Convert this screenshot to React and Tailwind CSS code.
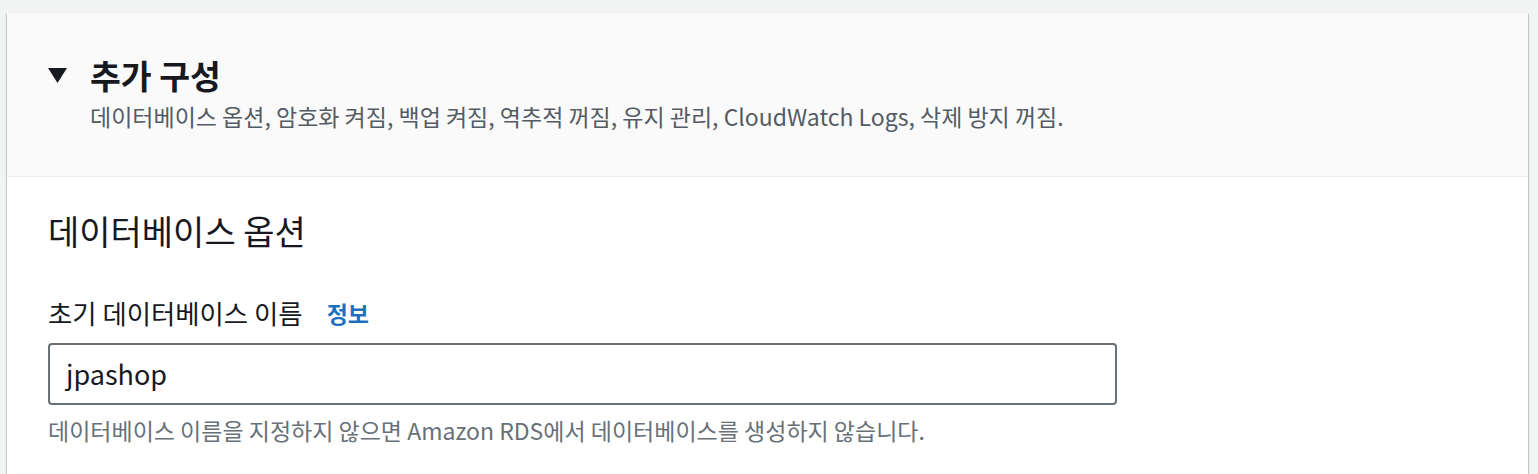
import React from 'react';

const font = { fontFamily: '"Noto Sans CJK KR", "Noto Sans", sans-serif' };

const Caret = () => (
  <svg width="19" height="15" viewBox="0 0 19 15" className="shrink-0">
    <path d="M0 0 H19 L9.5 15 Z" fill="#16191f" />
  </svg>
);

const App = () => {
  return (
    <div className="min-h-[474px] bg-[#f2f3f3] pt-[13px] pl-[7px] pr-[10px] overflow-hidden" style={font}>
      <div className="bg-white h-[470px] shadow-[0_1px_1px_0_rgba(0,28,36,0.3),1px_1px_1px_0_rgba(0,28,36,0.15),-1px_1px_1px_0_rgba(0,28,36,0.15)]">
        {/* Header */}
        <div className="bg-[#fafafa] border-b border-[#eaeded] h-[164px] pl-[41px] pt-[42px]">
          <div className="flex items-center gap-[23px]">
            <Caret />
            <h2 className="text-[33.5px] leading-[40px] font-bold text-[#16191f]">추가 구성</h2>
          </div>
          <p className="ml-[42px] mt-[6px] text-[23px] leading-[30px] text-[#545b64]">
            데이터베이스 옵션, 암호화 켜짐, 백업 켜짐, 역추적 꺼짐, 유지 관리, CloudWatch Logs, 삭제 방지 꺼짐.
          </p>
        </div>

        {/* Body */}
        <div className="pl-[41px] pt-[34px]">
          <h3 className="text-[34px] leading-[40px] text-[#16191f]">데이터베이스 옵션</h3>

          <div className="mt-[46px] flex items-center gap-[24px]">
            <span className="text-[26.4px] leading-[32px] text-[#16191f]">초기 데이터베이스 이름</span>
            <a className="text-[23px] leading-[32px] font-bold text-[#1f6fbf]">정보</a>
          </div>

          <div className="mt-[14px] w-[1069px] h-[62px] border-2 border-[#687078] rounded-[4px] flex items-center px-[16px] bg-white">
            <span className="text-[27px] text-[#16191f]">jpashop</span>
          </div>

          <p className="mt-[10px] text-[23px] leading-[30px] text-[#687078]">
            데이터베이스 이름을 지정하지 않으면 Amazon RDS에서 데이터베이스를 생성하지 않습니다.
          </p>
        </div>
      </div>
    </div>
  );
};

export default App;
